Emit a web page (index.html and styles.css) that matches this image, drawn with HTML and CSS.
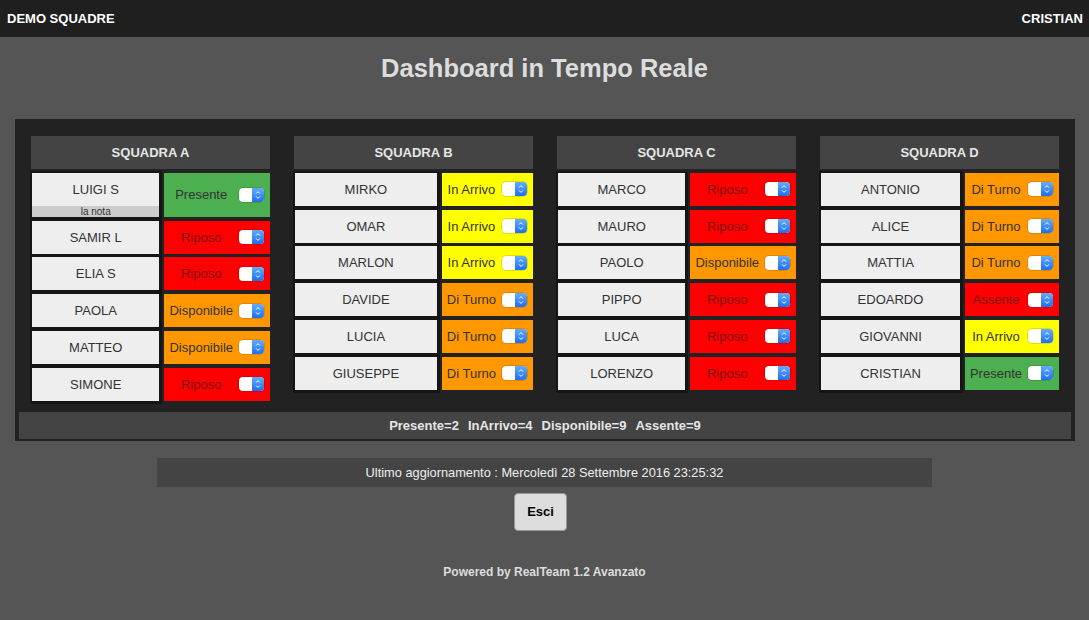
FILE: index.html
```html
<!DOCTYPE html>
<html lang="it">
<head>
<meta charset="utf-8">
<title>Dashboard in Tempo Reale</title>
<link rel="stylesheet" href="styles.css">
</head>
<body>
<header class="topbar">
  <span class="brand">DEMO SQUADRE</span>
  <span class="user">CRISTIAN</span>
</header>

<h1 class="title">Dashboard in Tempo Reale</h1>

<section class="panel">
  <div class="teams">
    <div class="team">
      <div class="team-head">SQUADRA A</div>
      <div class="name with-note"><span class="name-text">LUIGI S</span><span class="note">la nota</span></div>
      <div class="status green"><span class="st-text">Presente</span><span class="toggle"><span class="knob"><svg viewBox="0 0 12 14"><path d="M4 5.6 L6 3.6 L8 5.6 M4 8.4 L6 10.4 L8 8.4"/></svg></span></span></div>
      <div class="name">SAMIR L</div>
      <div class="status red"><span class="st-text">Riposo</span><span class="toggle"><span class="knob"><svg viewBox="0 0 12 14"><path d="M4 5.6 L6 3.6 L8 5.6 M4 8.4 L6 10.4 L8 8.4"/></svg></span></span></div>
      <div class="name">ELIA S</div>
      <div class="status red"><span class="st-text">Riposo</span><span class="toggle"><span class="knob"><svg viewBox="0 0 12 14"><path d="M4 5.6 L6 3.6 L8 5.6 M4 8.4 L6 10.4 L8 8.4"/></svg></span></span></div>
      <div class="name">PAOLA</div>
      <div class="status orange"><span class="st-text">Disponibile</span><span class="toggle"><span class="knob"><svg viewBox="0 0 12 14"><path d="M4 5.6 L6 3.6 L8 5.6 M4 8.4 L6 10.4 L8 8.4"/></svg></span></span></div>
      <div class="name">MATTEO</div>
      <div class="status orange"><span class="st-text">Disponibile</span><span class="toggle"><span class="knob"><svg viewBox="0 0 12 14"><path d="M4 5.6 L6 3.6 L8 5.6 M4 8.4 L6 10.4 L8 8.4"/></svg></span></span></div>
      <div class="name">SIMONE</div>
      <div class="status red"><span class="st-text">Riposo</span><span class="toggle"><span class="knob"><svg viewBox="0 0 12 14"><path d="M4 5.6 L6 3.6 L8 5.6 M4 8.4 L6 10.4 L8 8.4"/></svg></span></span></div>
    </div>

    <div class="team">
      <div class="team-head">SQUADRA B</div>
      <div class="name">MIRKO</div>
      <div class="status yellow"><span class="st-text">In Arrivo</span><span class="toggle"><span class="knob"><svg viewBox="0 0 12 14"><path d="M4 5.6 L6 3.6 L8 5.6 M4 8.4 L6 10.4 L8 8.4"/></svg></span></span></div>
      <div class="name">OMAR</div>
      <div class="status yellow"><span class="st-text">In Arrivo</span><span class="toggle"><span class="knob"><svg viewBox="0 0 12 14"><path d="M4 5.6 L6 3.6 L8 5.6 M4 8.4 L6 10.4 L8 8.4"/></svg></span></span></div>
      <div class="name">MARLON</div>
      <div class="status yellow"><span class="st-text">In Arrivo</span><span class="toggle"><span class="knob"><svg viewBox="0 0 12 14"><path d="M4 5.6 L6 3.6 L8 5.6 M4 8.4 L6 10.4 L8 8.4"/></svg></span></span></div>
      <div class="name">DAVIDE</div>
      <div class="status orange"><span class="st-text">Di Turno</span><span class="toggle"><span class="knob"><svg viewBox="0 0 12 14"><path d="M4 5.6 L6 3.6 L8 5.6 M4 8.4 L6 10.4 L8 8.4"/></svg></span></span></div>
      <div class="name">LUCIA</div>
      <div class="status orange"><span class="st-text">Di Turno</span><span class="toggle"><span class="knob"><svg viewBox="0 0 12 14"><path d="M4 5.6 L6 3.6 L8 5.6 M4 8.4 L6 10.4 L8 8.4"/></svg></span></span></div>
      <div class="name">GIUSEPPE</div>
      <div class="status orange"><span class="st-text">Di Turno</span><span class="toggle"><span class="knob"><svg viewBox="0 0 12 14"><path d="M4 5.6 L6 3.6 L8 5.6 M4 8.4 L6 10.4 L8 8.4"/></svg></span></span></div>
    </div>

    <div class="team">
      <div class="team-head">SQUADRA C</div>
      <div class="name">MARCO</div>
      <div class="status red"><span class="st-text">Riposo</span><span class="toggle"><span class="knob"><svg viewBox="0 0 12 14"><path d="M4 5.6 L6 3.6 L8 5.6 M4 8.4 L6 10.4 L8 8.4"/></svg></span></span></div>
      <div class="name">MAURO</div>
      <div class="status red"><span class="st-text">Riposo</span><span class="toggle"><span class="knob"><svg viewBox="0 0 12 14"><path d="M4 5.6 L6 3.6 L8 5.6 M4 8.4 L6 10.4 L8 8.4"/></svg></span></span></div>
      <div class="name">PAOLO</div>
      <div class="status orange"><span class="st-text">Disponibile</span><span class="toggle"><span class="knob"><svg viewBox="0 0 12 14"><path d="M4 5.6 L6 3.6 L8 5.6 M4 8.4 L6 10.4 L8 8.4"/></svg></span></span></div>
      <div class="name">PIPPO</div>
      <div class="status red"><span class="st-text">Riposo</span><span class="toggle"><span class="knob"><svg viewBox="0 0 12 14"><path d="M4 5.6 L6 3.6 L8 5.6 M4 8.4 L6 10.4 L8 8.4"/></svg></span></span></div>
      <div class="name">LUCA</div>
      <div class="status red"><span class="st-text">Riposo</span><span class="toggle"><span class="knob"><svg viewBox="0 0 12 14"><path d="M4 5.6 L6 3.6 L8 5.6 M4 8.4 L6 10.4 L8 8.4"/></svg></span></span></div>
      <div class="name">LORENZO</div>
      <div class="status red"><span class="st-text">Riposo</span><span class="toggle"><span class="knob"><svg viewBox="0 0 12 14"><path d="M4 5.6 L6 3.6 L8 5.6 M4 8.4 L6 10.4 L8 8.4"/></svg></span></span></div>
    </div>

    <div class="team">
      <div class="team-head">SQUADRA D</div>
      <div class="name">ANTONIO</div>
      <div class="status orange"><span class="st-text">Di Turno</span><span class="toggle"><span class="knob"><svg viewBox="0 0 12 14"><path d="M4 5.6 L6 3.6 L8 5.6 M4 8.4 L6 10.4 L8 8.4"/></svg></span></span></div>
      <div class="name">ALICE</div>
      <div class="status orange"><span class="st-text">Di Turno</span><span class="toggle"><span class="knob"><svg viewBox="0 0 12 14"><path d="M4 5.6 L6 3.6 L8 5.6 M4 8.4 L6 10.4 L8 8.4"/></svg></span></span></div>
      <div class="name">MATTIA</div>
      <div class="status orange"><span class="st-text">Di Turno</span><span class="toggle"><span class="knob"><svg viewBox="0 0 12 14"><path d="M4 5.6 L6 3.6 L8 5.6 M4 8.4 L6 10.4 L8 8.4"/></svg></span></span></div>
      <div class="name">EDOARDO</div>
      <div class="status red"><span class="st-text">Assente</span><span class="toggle"><span class="knob"><svg viewBox="0 0 12 14"><path d="M4 5.6 L6 3.6 L8 5.6 M4 8.4 L6 10.4 L8 8.4"/></svg></span></span></div>
      <div class="name">GIOVANNI</div>
      <div class="status yellow"><span class="st-text">In Arrivo</span><span class="toggle"><span class="knob"><svg viewBox="0 0 12 14"><path d="M4 5.6 L6 3.6 L8 5.6 M4 8.4 L6 10.4 L8 8.4"/></svg></span></span></div>
      <div class="name">CRISTIAN</div>
      <div class="status green"><span class="st-text">Presente</span><span class="toggle"><span class="knob"><svg viewBox="0 0 12 14"><path d="M4 5.6 L6 3.6 L8 5.6 M4 8.4 L6 10.4 L8 8.4"/></svg></span></span></div>
    </div>
  </div>

  <div class="summary">
    <span>Presente=2</span><span>InArrivo=4</span><span>Disponibile=9</span><span>Assente=9</span>
  </div>
</section>

<div class="updated">Ultimo aggiornamento : Mercoledì 28 Settembre 2016 23:25:32</div>

<div class="actions"><button class="btn-exit" type="button">Esci</button></div>

<footer class="powered">Powered by RealTeam 1.2 Avanzato</footer>
</body>
</html>
```

FILE: styles.css
```css
* { box-sizing: border-box; }

html, body {
  margin: 0;
  padding: 0;
}

body {
  background: #555555;
  font-family: "Liberation Sans", Arial, Helvetica, sans-serif;
  font-size: 13px;
  color: #333;
  min-height: 620px;
}

.topbar {
  height: 37px;
  background: #1f1f1f;
  display: flex;
  justify-content: space-between;
  align-items: center;
  padding: 0 6px 0 7px;
  color: #fff;
  font-weight: bold;
  font-size: 13px;
}

.title {
  margin: 0;
  padding: 16px 0 36px;
  line-height: 30px;
  font-size: 25.5px;
  font-weight: bold;
  text-align: center;
  color: #dddddd;
}

.panel {
  margin: 0 14px 0 15px;
  background: #222222;
  padding: 17px 4px 2px;
}

.teams {
  display: grid;
  grid-template-columns: repeat(4, 239px);
  column-gap: 24px;
  margin: 0 12px;
  align-items: start;
}

.team {
  display: grid;
  grid-template-columns: 1fr max-content;
  column-gap: 5px;
  row-gap: 3.8px;
}

.team-head {
  grid-column: 1 / -1;
  height: 33px;
  line-height: 33px;
  background: #444444;
  color: #e6e6e6;
  font-weight: bold;
  text-align: center;
  font-size: 13px;
}

.name {
  height: 33px;
  background: #eeeeee;
  color: #333;
  display: flex;
  align-items: center;
  justify-content: center;
  box-shadow: 0 0 0 2px #151515, 1px 1px 0 2px #151515;
  margin-left: 1px;
}

.name.with-note {
  height: 44px;
  flex-direction: column;
  align-items: stretch;
}

.name-text {
  flex: 1;
  display: flex;
  align-items: center;
  justify-content: center;
}

.note {
  height: 11px;
  line-height: 11px;
  background: #cccccc;
  font-size: 10px;
  text-align: center;
  color: #333;
}

.status {
  height: 33px;
  display: flex;
  align-items: center;
  padding: 0 6px 0 5px;
  color: #333;
}

.team .status:nth-child(3) { align-self: stretch; height: auto; }

.st-text {
  flex: 1;
  text-align: center;
  margin-right: 6px;
  white-space: nowrap;
}

.green { background: #4caf50; }
.red { background: #ff0000; color: #7e1212; }
.orange { background: #ff9800; }
.yellow { background: #ffff00; }

.toggle {
  width: 25px;
  height: 14px;
  border-radius: 4px;
  background: #ffffff;
  display: flex;
  justify-content: flex-end;
  box-shadow: 0 0 0 0.5px rgba(0, 0, 0, 0.25);
  flex: none;
}

.knob {
  width: 12px;
  height: 14px;
  border-radius: 0 4px 4px 0;
  background: linear-gradient(#62acff, #1d6ff0);
  display: block;
}

.knob svg {
  display: block;
  width: 12px;
  height: 14px;
}

.knob path {
  fill: none;
  stroke: #ffffff;
  stroke-width: 1;
}

.summary {
  margin-top: 11px;
  height: 27px;
  background: #444444;
  color: #e6e6e6;
  font-weight: bold;
  font-size: 13px;
  display: flex;
  justify-content: center;
  align-items: center;
  gap: 9px;
}

.updated {
  width: 775px;
  margin: 17px auto 0;
  height: 29px;
  line-height: 29px;
  background: #444444;
  color: #eeeeee;
  text-align: center;
  font-size: 12.8px;
}

.actions {
  display: flex;
  justify-content: center;
  margin-top: 6px;
  padding-right: 8px;
}

.btn-exit {
  width: 53px;
  height: 38px;
  background: #dddddd;
  border: 1px solid #999;
  border-radius: 4px;
  font-family: "Liberation Sans", Arial, sans-serif;
  font-weight: bold;
  font-size: 13px;
  color: #000;
  padding: 0;
}

.powered {
  margin-top: 34px;
  line-height: 14px;
  text-align: center;
  font-weight: bold;
  font-size: 12px;
  color: #dddddd;
}
```
